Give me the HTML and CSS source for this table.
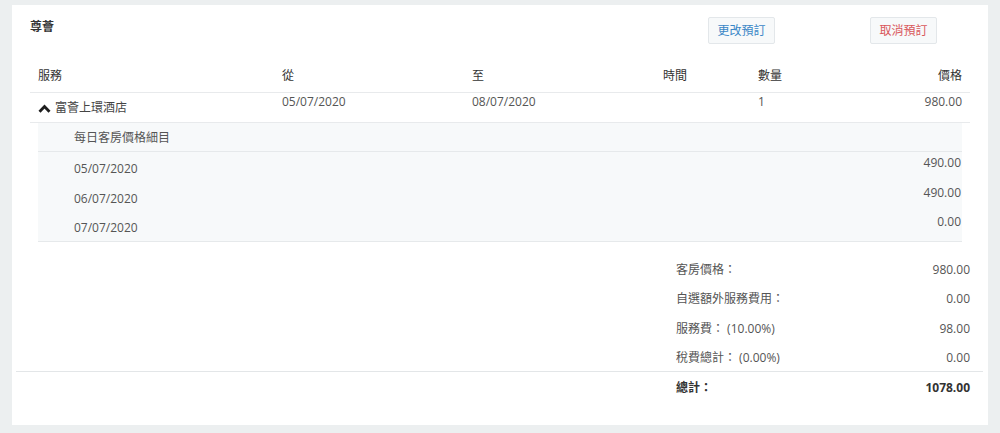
FILE: index.html
```html
<!DOCTYPE html>
<html lang="zh-Hant">
<head>
<meta charset="utf-8">
<link rel="stylesheet" href="styles.css">
</head>
<body>
<div class="card">
  <div class="top">
    <div class="title">尊薈</div>
    <div class="actions">
      <button class="btn btn-blue">更改預訂</button>
      <button class="btn btn-red">取消預訂</button>
    </div>
  </div>

  <table class="booking">
    <colgroup>
      <col class="c1"><col class="c2"><col class="c3"><col class="c4"><col class="c5"><col class="c6">
    </colgroup>
    <thead>
      <tr>
        <th>服務</th><th>從</th><th>至</th><th>時間</th><th>數量</th><th class="num">價格</th>
      </tr>
    </thead>
    <tbody>
      <tr class="main-row">
        <td class="name"><svg class="chev" width="13" height="9" viewBox="0 0 13 9"><polyline points="1.5,7.8 6.5,2.6 11.5,7.8" fill="none" stroke="#1e1e1e" stroke-width="2.8"/></svg>富薈上環酒店</td>
        <td>05/07/2020</td>
        <td>08/07/2020</td>
        <td></td>
        <td>1</td>
        <td class="num">980.00</td>
      </tr>
      <tr class="detail-row">
        <td colspan="6">
          <div class="detail">
            <div class="detail-head">每日客房價格細目</div>
            <div class="day"><span class="d">05/07/2020</span><span class="p">490.00</span></div>
            <div class="day"><span class="d">06/07/2020</span><span class="p">490.00</span></div>
            <div class="day"><span class="d">07/07/2020</span><span class="p">0.00</span></div>
          </div>
        </td>
      </tr>
    </tbody>
  </table>

  <div class="summary">
    <div class="sum-lines">
      <div class="sum-row"><span>客房價格：</span><span>980.00</span></div>
      <div class="sum-row"><span>自選額外服務費用：</span><span>0.00</span></div>
      <div class="sum-row"><span>服務費： (10.00%)</span><span>98.00</span></div>
      <div class="sum-row last"><span>稅費總計： (0.00%)</span><span>0.00</span></div>
    </div>
    <div class="total">
      <div class="sum-lines">
        <div class="sum-row total-row"><span>總計：</span><span>1078.00</span></div>
      </div>
    </div>
  </div>
</div>
</body>
</html>
```

FILE: styles.css
```css
html, body {
  margin: 0;
  padding: 0;
}
body {
  background: #eceff0;
  font-family: "Open Sans", "Noto Sans CJK TC", sans-serif;
  font-size: 12px;
  line-height: 17px;
  color: #555;
}
.card {
  background: #fff;
  margin: 5px 12px 0 12px;
  height: 420px;
  box-sizing: border-box;
  overflow: hidden;
}
.top {
  display: flex;
  align-items: flex-start;
  padding: 12px 51px 0 18px;
  height: 27px;
}
.title {
  font-weight: bold;
  color: #333;
  margin-top: 1px;
}
.actions {
  margin-left: auto;
  display: flex;
  gap: 95px;
}
.btn {
  font-family: "Open Sans", "Noto Sans CJK TC", sans-serif;
  font-size: 12px;
  line-height: 17px;
  width: 67px;
  height: 27px;
  padding: 0;
  text-align: center;
  background: #f7f9fa;
  border: 1px solid #e3e7ea;
  border-radius: 2px;
  box-sizing: border-box;
}
.btn-blue { color: #3a87c7; }
.btn-red { color: #d9575a; }

.booking {
  width: 940px;
  margin: 16px 18px 0 18px;
  border-collapse: collapse;
  table-layout: fixed;
}
.c1 { width: 244px; }
.c2 { width: 190px; }
.c3 { width: 191px; }
.c4 { width: 95px; }
.c5 { width: 120px; }
.c6 { width: 100px; }
.booking th {
  font-weight: normal;
  color: #333;
  text-align: left;
  padding: 7px 8px 8px 8px;
  border-bottom: 1px solid #e8eaec;
}
.booking .num { text-align: right; }
.main-row td {
  vertical-align: top;
  padding: 0 8px;
  height: 30px;
  box-sizing: border-box;
  border-bottom: 1px solid #e8eaec;
}
.main-row td.name {
  padding-top: 6px;
  color: #444;
}
.chev {
  display: inline-block;
  vertical-align: -1px;
  margin: 0 4px 0 0;
}
.detail-row td {
  padding: 0 8px;
}
.detail {
  background: #f7f9fa;
  border-bottom: 1px solid #e6e9eb;
}
.detail-head {
  padding: 6px 0 0 36px;
  height: 29px;
  box-sizing: border-box;
  border-bottom: 1px solid #e6e9eb;
}
.day {
  display: flex;
  justify-content: space-between;
  align-items: flex-start;
  height: 29.5px;
}
.day:first-of-type {
  height: 30px;
}
.day .d { padding: 8px 0 0 36px; }
.day .p { padding: 2px 1px 0 0; }

.summary {
  margin-top: 13px;
}
.sum-lines {
  width: 294px;
  margin: 0 18px 0 auto;
}
.sum-row {
  display: flex;
  justify-content: space-between;
  align-items: center;
  height: 29.5px;
}
.sum-row.last {
  height: 28px;
}
.total {
  margin: 0 5px 0 4px;
  border-top: 1px solid #e3e6e8;
}
.total .sum-lines {
  margin-right: 13px;
}
.total-row {
  height: 31px;
  font-weight: bold;
  color: #333;
}
```
